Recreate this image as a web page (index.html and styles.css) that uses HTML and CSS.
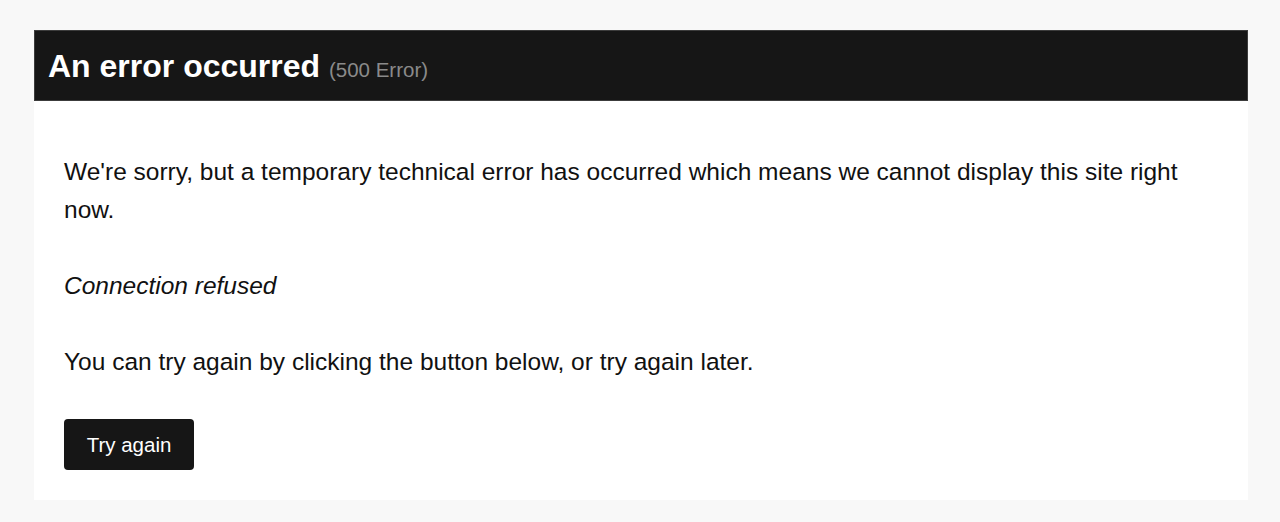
FILE: index.html
```html
<!DOCTYPE html>
<html lang="en">
<head>
    <meta charset="UTF-8">
    <meta name="viewport" content="width=device-width, initial-scale=1.0">
    <title>An error occurred</title>
    <link rel="stylesheet" href="styles.css">
</head>
<body>

<!-- Error card -->
<div class="error-card">
    <div class="error-header">
        <h1>An error occurred <span class="error-code">(500 Error)</span></h1>
    </div>

    <div class="error-body">
        <p>We're sorry, but a temporary technical error has occurred which means we cannot display this site right now.</p>
        <p class="error-detail">Connection refused</p>
        <p>You can try again by clicking the button below, or try again later.</p>
        <button class="retry-btn" onclick="location.reload()">Try again</button>
    </div>
</div>

</body>
</html>
```

FILE: styles.css
```css
/* Base Styles */
* {
    margin: 0;
    padding: 0;
    box-sizing: border-box;
    font-family: "Liberation Sans", Arial, sans-serif;
}

body {
    background-color: #f8f8f8;
    padding: 30px 32px 22px 34px;
}

/* Card */
.error-card {
    background: white;
}

.error-header {
    background: #161616;
    border: 1px solid #3c3c3c;
    height: 71px;
    padding: 0 13px;
    display: flex;
    align-items: center;
}

.error-header h1 {
    color: white;
    font-size: 32px;
    font-weight: bold;
    padding-top: 2px;
}

.error-code {
    color: #8a8a8a;
    font-size: 20.5px;
    font-weight: normal;
}

.error-body {
    padding: 52px 30px 30px;
}

.error-body p {
    color: #111;
    font-size: 24.5px;
    line-height: 38px;
    margin-bottom: 38px;
}

.error-detail {
    font-style: italic;
}

.retry-btn {
    background: #161616;
    color: white;
    border: none;
    border-radius: 4px;
    font-size: 20.5px;
    width: 130px;
    height: 51px;
    cursor: pointer;
    display: block;
}

.retry-btn:hover {
    background: #333;
}
```
